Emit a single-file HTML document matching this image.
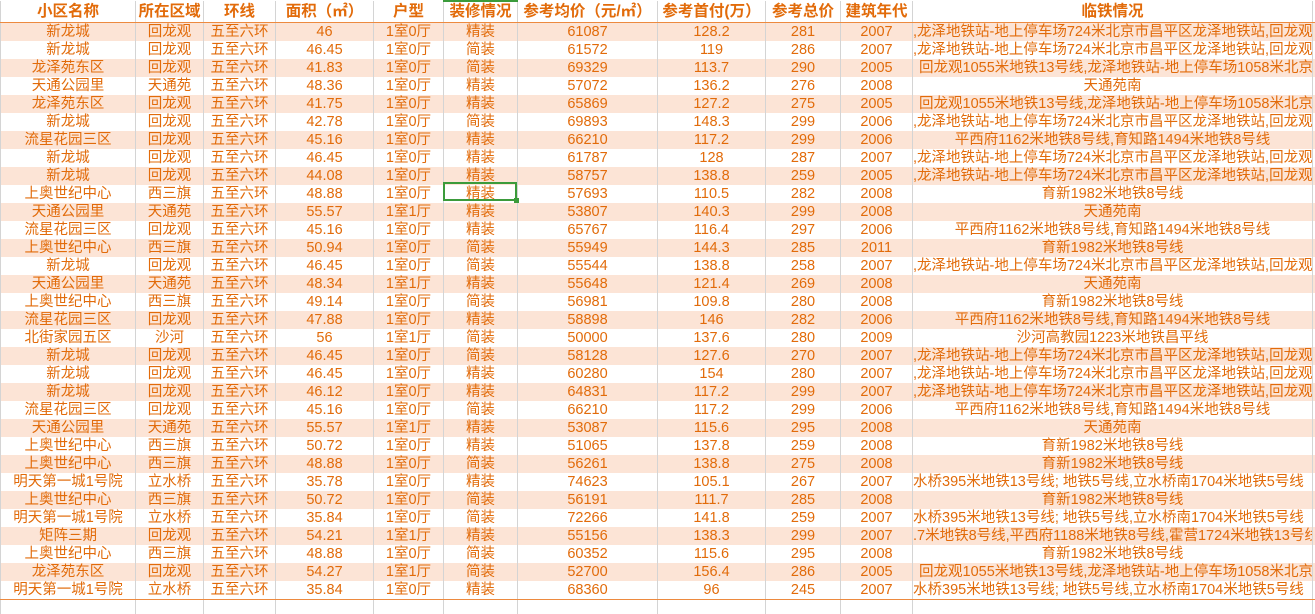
<!DOCTYPE html>
<html><head><meta charset="utf-8"><style>
body{margin:0;width:1315px;height:611px;overflow:hidden;background:#fff;font-family:"Liberation Sans","Noto Sans CJK SC",sans-serif;}
table{border-collapse:collapse;table-layout:fixed;position:absolute;left:0;top:0;width:1315px;}
td{height:18px;line-height:18px;padding:0;border-left:1px solid #d4d4d4;color:#e26b0a;font-size:14.5px;text-align:center;white-space:nowrap;overflow:hidden;box-sizing:border-box;}
tr.h td{height:20px;line-height:20px;font-weight:bold;font-size:15.5px;border-bottom:1px solid #ed8a3f;}
tbody tr:nth-child(even) td{background:#fce4d6;}
tbody tr:nth-last-child(2) td{border-bottom:1px solid #ed8a3f;}
td.l{text-align:left;}
td.b{padding-left:6px;}
tr.e td{height:14px;border-bottom:none;background:#fff!important;}
.sel{position:absolute;left:443px;top:182px;width:74px;height:19px;border:2px solid #3b9b3b;box-sizing:border-box;}
.sel:after{content:"";position:absolute;right:-4px;bottom:-4px;width:5px;height:5px;background:#3b9b3b;}
</style></head><body>
<table>
<colgroup><col style="width:135px"><col style="width:68px"><col style="width:72px"><col style="width:98px"><col style="width:70px"><col style="width:74px"><col style="width:140px"><col style="width:108px"><col style="width:75px"><col style="width:72px"><col style="width:400px"><col style="width:3px"></colgroup>
<tbody>
<tr class="h"><td>小区名称</td><td>所在区域</td><td>环线</td><td>面积（㎡）</td><td>户型</td><td style="border-top:2px solid #3b9b3b">装修情况</td><td>参考均价（元/㎡）</td><td>参考首付(万）</td><td>参考总价</td><td>建筑年代</td><td>临铁情况</td><td></td></tr>
<tr><td>新龙城</td><td>回龙观</td><td>五至六环</td><td>46</td><td>1室0厅</td><td>精装</td><td>61087</td><td>128.2</td><td>281</td><td>2007</td><td class="l">,龙泽地铁站-地上停车场724米北京市昌平区龙泽地铁站,回龙观</td><td></td></tr>
<tr><td>新龙城</td><td>回龙观</td><td>五至六环</td><td>46.45</td><td>1室0厅</td><td>简装</td><td>61572</td><td>119</td><td>286</td><td>2007</td><td class="l">,龙泽地铁站-地上停车场724米北京市昌平区龙泽地铁站,回龙观</td><td></td></tr>
<tr><td>龙泽苑东区</td><td>回龙观</td><td>五至六环</td><td>41.83</td><td>1室0厅</td><td>简装</td><td>69329</td><td>113.7</td><td>290</td><td>2005</td><td class="l b">回龙观1055米地铁13号线,龙泽地铁站-地上停车场1058米北京</td><td></td></tr>
<tr><td>天通公园里</td><td>天通苑</td><td>五至六环</td><td>48.36</td><td>1室0厅</td><td>精装</td><td>57072</td><td>136.2</td><td>276</td><td>2008</td><td>天通苑南</td><td></td></tr>
<tr><td>龙泽苑东区</td><td>回龙观</td><td>五至六环</td><td>41.75</td><td>1室0厅</td><td>精装</td><td>65869</td><td>127.2</td><td>275</td><td>2005</td><td class="l b">回龙观1055米地铁13号线,龙泽地铁站-地上停车场1058米北京</td><td></td></tr>
<tr><td>新龙城</td><td>回龙观</td><td>五至六环</td><td>42.78</td><td>1室0厅</td><td>简装</td><td>69893</td><td>148.3</td><td>299</td><td>2006</td><td class="l">,龙泽地铁站-地上停车场724米北京市昌平区龙泽地铁站,回龙观</td><td></td></tr>
<tr><td>流星花园三区</td><td>回龙观</td><td>五至六环</td><td>45.16</td><td>1室0厅</td><td>精装</td><td>66210</td><td>117.2</td><td>299</td><td>2006</td><td>平西府1162米地铁8号线,育知路1494米地铁8号线</td><td></td></tr>
<tr><td>新龙城</td><td>回龙观</td><td>五至六环</td><td>46.45</td><td>1室0厅</td><td>精装</td><td>61787</td><td>128</td><td>287</td><td>2007</td><td class="l">,龙泽地铁站-地上停车场724米北京市昌平区龙泽地铁站,回龙观</td><td></td></tr>
<tr><td>新龙城</td><td>回龙观</td><td>五至六环</td><td>44.08</td><td>1室0厅</td><td>精装</td><td>58757</td><td>138.8</td><td>259</td><td>2005</td><td class="l">,龙泽地铁站-地上停车场724米北京市昌平区龙泽地铁站,回龙观</td><td></td></tr>
<tr><td>上奥世纪中心</td><td>西三旗</td><td>五至六环</td><td>48.88</td><td>1室0厅</td><td>精装</td><td>57693</td><td>110.5</td><td>282</td><td>2008</td><td>育新1982米地铁8号线</td><td></td></tr>
<tr><td>天通公园里</td><td>天通苑</td><td>五至六环</td><td>55.57</td><td>1室1厅</td><td>精装</td><td>53807</td><td>140.3</td><td>299</td><td>2008</td><td>天通苑南</td><td></td></tr>
<tr><td>流星花园三区</td><td>回龙观</td><td>五至六环</td><td>45.16</td><td>1室0厅</td><td>精装</td><td>65767</td><td>116.4</td><td>297</td><td>2006</td><td>平西府1162米地铁8号线,育知路1494米地铁8号线</td><td></td></tr>
<tr><td>上奥世纪中心</td><td>西三旗</td><td>五至六环</td><td>50.94</td><td>1室0厅</td><td>简装</td><td>55949</td><td>144.3</td><td>285</td><td>2011</td><td>育新1982米地铁8号线</td><td></td></tr>
<tr><td>新龙城</td><td>回龙观</td><td>五至六环</td><td>46.45</td><td>1室0厅</td><td>简装</td><td>55544</td><td>138.8</td><td>258</td><td>2007</td><td class="l">,龙泽地铁站-地上停车场724米北京市昌平区龙泽地铁站,回龙观</td><td></td></tr>
<tr><td>天通公园里</td><td>天通苑</td><td>五至六环</td><td>48.34</td><td>1室1厅</td><td>精装</td><td>55648</td><td>121.4</td><td>269</td><td>2008</td><td>天通苑南</td><td></td></tr>
<tr><td>上奥世纪中心</td><td>西三旗</td><td>五至六环</td><td>49.14</td><td>1室0厅</td><td>简装</td><td>56981</td><td>109.8</td><td>280</td><td>2008</td><td>育新1982米地铁8号线</td><td></td></tr>
<tr><td>流星花园三区</td><td>回龙观</td><td>五至六环</td><td>47.88</td><td>1室0厅</td><td>精装</td><td>58898</td><td>146</td><td>282</td><td>2006</td><td>平西府1162米地铁8号线,育知路1494米地铁8号线</td><td></td></tr>
<tr><td>北街家园五区</td><td>沙河</td><td>五至六环</td><td>56</td><td>1室1厅</td><td>简装</td><td>50000</td><td>137.6</td><td>280</td><td>2009</td><td>沙河高教园1223米地铁昌平线</td><td></td></tr>
<tr><td>新龙城</td><td>回龙观</td><td>五至六环</td><td>46.45</td><td>1室0厅</td><td>简装</td><td>58128</td><td>127.6</td><td>270</td><td>2007</td><td class="l">,龙泽地铁站-地上停车场724米北京市昌平区龙泽地铁站,回龙观</td><td></td></tr>
<tr><td>新龙城</td><td>回龙观</td><td>五至六环</td><td>46.45</td><td>1室0厅</td><td>精装</td><td>60280</td><td>154</td><td>280</td><td>2007</td><td class="l">,龙泽地铁站-地上停车场724米北京市昌平区龙泽地铁站,回龙观</td><td></td></tr>
<tr><td>新龙城</td><td>回龙观</td><td>五至六环</td><td>46.12</td><td>1室0厅</td><td>精装</td><td>64831</td><td>117.2</td><td>299</td><td>2007</td><td class="l">,龙泽地铁站-地上停车场724米北京市昌平区龙泽地铁站,回龙观</td><td></td></tr>
<tr><td>流星花园三区</td><td>回龙观</td><td>五至六环</td><td>45.16</td><td>1室0厅</td><td>简装</td><td>66210</td><td>117.2</td><td>299</td><td>2006</td><td>平西府1162米地铁8号线,育知路1494米地铁8号线</td><td></td></tr>
<tr><td>天通公园里</td><td>天通苑</td><td>五至六环</td><td>55.57</td><td>1室1厅</td><td>精装</td><td>53087</td><td>115.6</td><td>295</td><td>2008</td><td>天通苑南</td><td></td></tr>
<tr><td>上奥世纪中心</td><td>西三旗</td><td>五至六环</td><td>50.72</td><td>1室0厅</td><td>精装</td><td>51065</td><td>137.8</td><td>259</td><td>2008</td><td>育新1982米地铁8号线</td><td></td></tr>
<tr><td>上奥世纪中心</td><td>西三旗</td><td>五至六环</td><td>48.88</td><td>1室0厅</td><td>简装</td><td>56261</td><td>138.8</td><td>275</td><td>2008</td><td>育新1982米地铁8号线</td><td></td></tr>
<tr><td>明天第一城1号院</td><td>立水桥</td><td>五至六环</td><td>35.78</td><td>1室0厅</td><td>精装</td><td>74623</td><td>105.1</td><td>267</td><td>2007</td><td class="l">水桥395米地铁13号线; 地铁5号线,立水桥南1704米地铁5号线</td><td></td></tr>
<tr><td>上奥世纪中心</td><td>西三旗</td><td>五至六环</td><td>50.72</td><td>1室0厅</td><td>简装</td><td>56191</td><td>111.7</td><td>285</td><td>2008</td><td>育新1982米地铁8号线</td><td></td></tr>
<tr><td>明天第一城1号院</td><td>立水桥</td><td>五至六环</td><td>35.84</td><td>1室0厅</td><td>简装</td><td>72266</td><td>141.8</td><td>259</td><td>2007</td><td class="l">水桥395米地铁13号线; 地铁5号线,立水桥南1704米地铁5号线</td><td></td></tr>
<tr><td>矩阵三期</td><td>回龙观</td><td>五至六环</td><td>54.21</td><td>1室1厅</td><td>精装</td><td>55156</td><td>138.3</td><td>299</td><td>2007</td><td class="l">.7米地铁8号线,平西府1188米地铁8号线,霍营1724米地铁13号线</td><td></td></tr>
<tr><td>上奥世纪中心</td><td>西三旗</td><td>五至六环</td><td>48.88</td><td>1室0厅</td><td>简装</td><td>60352</td><td>115.6</td><td>295</td><td>2008</td><td>育新1982米地铁8号线</td><td></td></tr>
<tr><td>龙泽苑东区</td><td>回龙观</td><td>五至六环</td><td>54.27</td><td>1室1厅</td><td>简装</td><td>52700</td><td>156.4</td><td>286</td><td>2005</td><td class="l b">回龙观1055米地铁13号线,龙泽地铁站-地上停车场1058米北京</td><td></td></tr>
<tr><td>明天第一城1号院</td><td>立水桥</td><td>五至六环</td><td>35.84</td><td>1室0厅</td><td>精装</td><td>68360</td><td>96</td><td>245</td><td>2007</td><td class="l">水桥395米地铁13号线; 地铁5号线,立水桥南1704米地铁5号线</td><td></td></tr>
<tr class="e"><td></td><td></td><td></td><td></td><td></td><td></td><td></td><td></td><td></td><td></td><td></td><td></td></tr>
</tbody></table>
<div class="sel"></div>
</body></html>
